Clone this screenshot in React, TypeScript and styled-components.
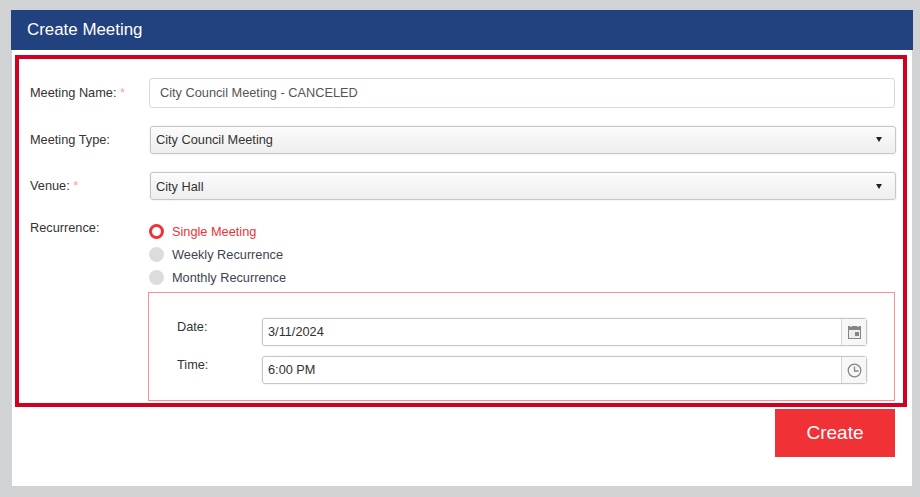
import React from "react";
import styled, { createGlobalStyle } from "styled-components";

const Global = createGlobalStyle`
  html, body { margin: 0; padding: 0; width: 920px; height: 497px; overflow: hidden; background: #d1d2d4; }
  body { font-family: "Liberation Sans", Arial, sans-serif; color: #333; }
  * { box-sizing: border-box; }
`;
const Page = styled.div`
  padding: 10px 7px 0 11px;
  height: 497px;
`;
const Header = styled.h1`
  margin: 0;
  height: 40px;
  width: 902px;
  background: #21417f;
  color: #fff;
  font-size: 16.9px;
  font-weight: 400;
  line-height: 40px;
  padding-left: 16px;
`;
const Body = styled.div`
  margin-left: 1px;
  width: 900px;
  height: 436px;
  background: #fff;
  padding: 5px 5px 0 3px;
`;
const RedBox = styled.div`
  width: 892px;
  height: 352px;
  border: 4px solid #cf0022;
  padding: 19px 7px 0 11px;
`;
const Row = styled.div<{ $h: number; $mb: number }>`
  display: grid;
  grid-template-columns: 119px 1fr;
  height: ${p => p.$h}px;
  margin-bottom: ${p => p.$mb}px;
`;
const Label = styled.label<{ $lh: number }>`
  font-size: 12.75px;
  line-height: ${p => p.$lh}px;
  color: #333;
`;
const Star = styled.span`
  color: #ff9a9a;
`;
const TextBox = styled.div`
  height: 30px;
  width: 746px;
  border: 1px solid #d3d9df;
  border-radius: 3px;
  padding-left: 10px;
  font-size: 12.75px;
  line-height: 28px;
  color: #555;
`;
const Select = styled.div<{ $pb: number }>`
  height: 28px;
  width: 746px;
  margin-left: 1px;
  border: 1px solid #c6c6c6;
  border-radius: 3px;
  box-shadow: 0 0 2px #ddd;
  background: linear-gradient(#fbfbfb, #eeeeee);
  padding: 0 13px ${p => p.$pb}px 5px;
  font-size: 12.75px;
  color: #333;
  display: flex;
  align-items: center;
  justify-content: space-between;
`;
const Arrow = styled.span`
  width: 0;
  height: 0;
  border-left: 3px solid transparent;
  border-right: 3px solid transparent;
  border-top: 5px solid #222;
`;
const RecLabel = styled.label`
  font-size: 12.75px;
  line-height: 16px;
`;
const Radios = styled.div`
  display: flex;
  flex-direction: column;
  gap: 7px;
  padding-top: 3px;
`;
const RadioRow = styled.div`
  display: flex;
  align-items: center;
  height: 16px;
`;
const RadioDot = styled.span<{ $on?: boolean }>`
  width: 15px;
  height: 15px;
  border-radius: 50%;
  background: ${p => (p.$on ? "#fff" : "#dcdcdc")};
  border: ${p => (p.$on ? "3px solid #f03237" : "none")};
  margin-right: 8px;
`;
const RadioText = styled.span<{ $on?: boolean }>`
  font-size: 12.75px;
  color: ${p => (p.$on ? "#f03237" : "#3c4450")};
`;
const DateBox = styled.div`
  width: 747px;
  height: 109px;
  margin-top: 7px;
  margin-left: 118px;
  border: 1px solid #f79090;
  padding: 25px 27px 0 28px;
`;
const DateRow = styled.div`
  display: grid;
  grid-template-columns: 85px 605px;
  height: 28px;
  margin-bottom: 10px;
`;
const DateLabel = styled.label`
  font-size: 12.75px;
  line-height: 18px;
  color: #333;
`;
const Picker = styled.div`
  height: 28px;
  display: flex;
  border: 1px solid #c6c6c6;
  border-radius: 3px;
  box-shadow: 0 0 2px #ddd;
`;
const PickerValue = styled.div`
  flex: 1;
  padding-left: 5px;
  font-size: 12.75px;
  line-height: 26px;
  color: #333;
`;
const PickerBtn = styled.div`
  width: 25px;
  border-left: 1px solid #d5d5d5;
  background: #f7f7f7;
  display: flex;
  align-items: center;
  justify-content: center;
`;
const Footer = styled.div`
  display: flex;
  justify-content: flex-end;
  padding: 2px 12px 0 0;
  width: 892px;
`;
const CreateBtn = styled.button`
  width: 120px;
  height: 48px;
  padding: 0;
  background: #f03237;
  border: 0;
  color: #fff;
  font-family: inherit;
  font-size: 19px;
`;

export default function App() {
  return (
    <Page>
      <Global />
      <Header>Create Meeting</Header>
      <Body>
        <RedBox>
          <Row $h={30} $mb={18}>
            <Label $lh={29}>Meeting Name: <Star>*</Star></Label>
            <TextBox>City Council Meeting - CANCELED</TextBox>
          </Row>
          <Row $h={28} $mb={18}>
            <Label $lh={27}>Meeting Type:</Label>
            <Select $pb={1}>City Council Meeting<Arrow /></Select>
          </Row>
          <Row $h={28} $mb={20}>
            <Label $lh={27}>Venue: <Star>*</Star></Label>
            <Select $pb={0}>City Hall<Arrow /></Select>
          </Row>
          <Row $h={65} $mb={0}>
            <RecLabel>Recurrence:</RecLabel>
            <Radios>
              <RadioRow><RadioDot $on /><RadioText $on>Single Meeting</RadioText></RadioRow>
              <RadioRow><RadioDot /><RadioText>Weekly Recurrence</RadioText></RadioRow>
              <RadioRow><RadioDot /><RadioText>Monthly Recurrence</RadioText></RadioRow>
            </Radios>
          </Row>
          <DateBox>
            <DateRow>
              <DateLabel>Date:</DateLabel>
              <Picker>
                <PickerValue>3/11/2024</PickerValue>
                <PickerBtn>
                  <svg width="13" height="13" viewBox="0 0 13 13">
                    <path d="M0 0h13v13H0z" fill="#858585" />
                    <path d="M2 0h2v1H2zM9 0h2v1H9z" fill="#d0d0d0" />
                    <path d="M1 4h11v8H1z" fill="#ededed" />
                    <path d="M7 6h4v4H7z" fill="#858585" />
                  </svg>
                </PickerBtn>
              </Picker>
            </DateRow>
            <DateRow>
              <DateLabel>Time:</DateLabel>
              <Picker>
                <PickerValue>6:00 PM</PickerValue>
                <PickerBtn>
                  <svg width="15" height="15" viewBox="0 0 15 15" fill="none" stroke="#858585" strokeWidth="1.3">
                    <circle cx="7.5" cy="7.5" r="6.3" />
                    <path d="M7.5 3.5V8H11.5" />
                  </svg>
                </PickerBtn>
              </Picker>
            </DateRow>
          </DateBox>
        </RedBox>
        <Footer><CreateBtn>Create</CreateBtn></Footer>
      </Body>
    </Page>
  );
}
